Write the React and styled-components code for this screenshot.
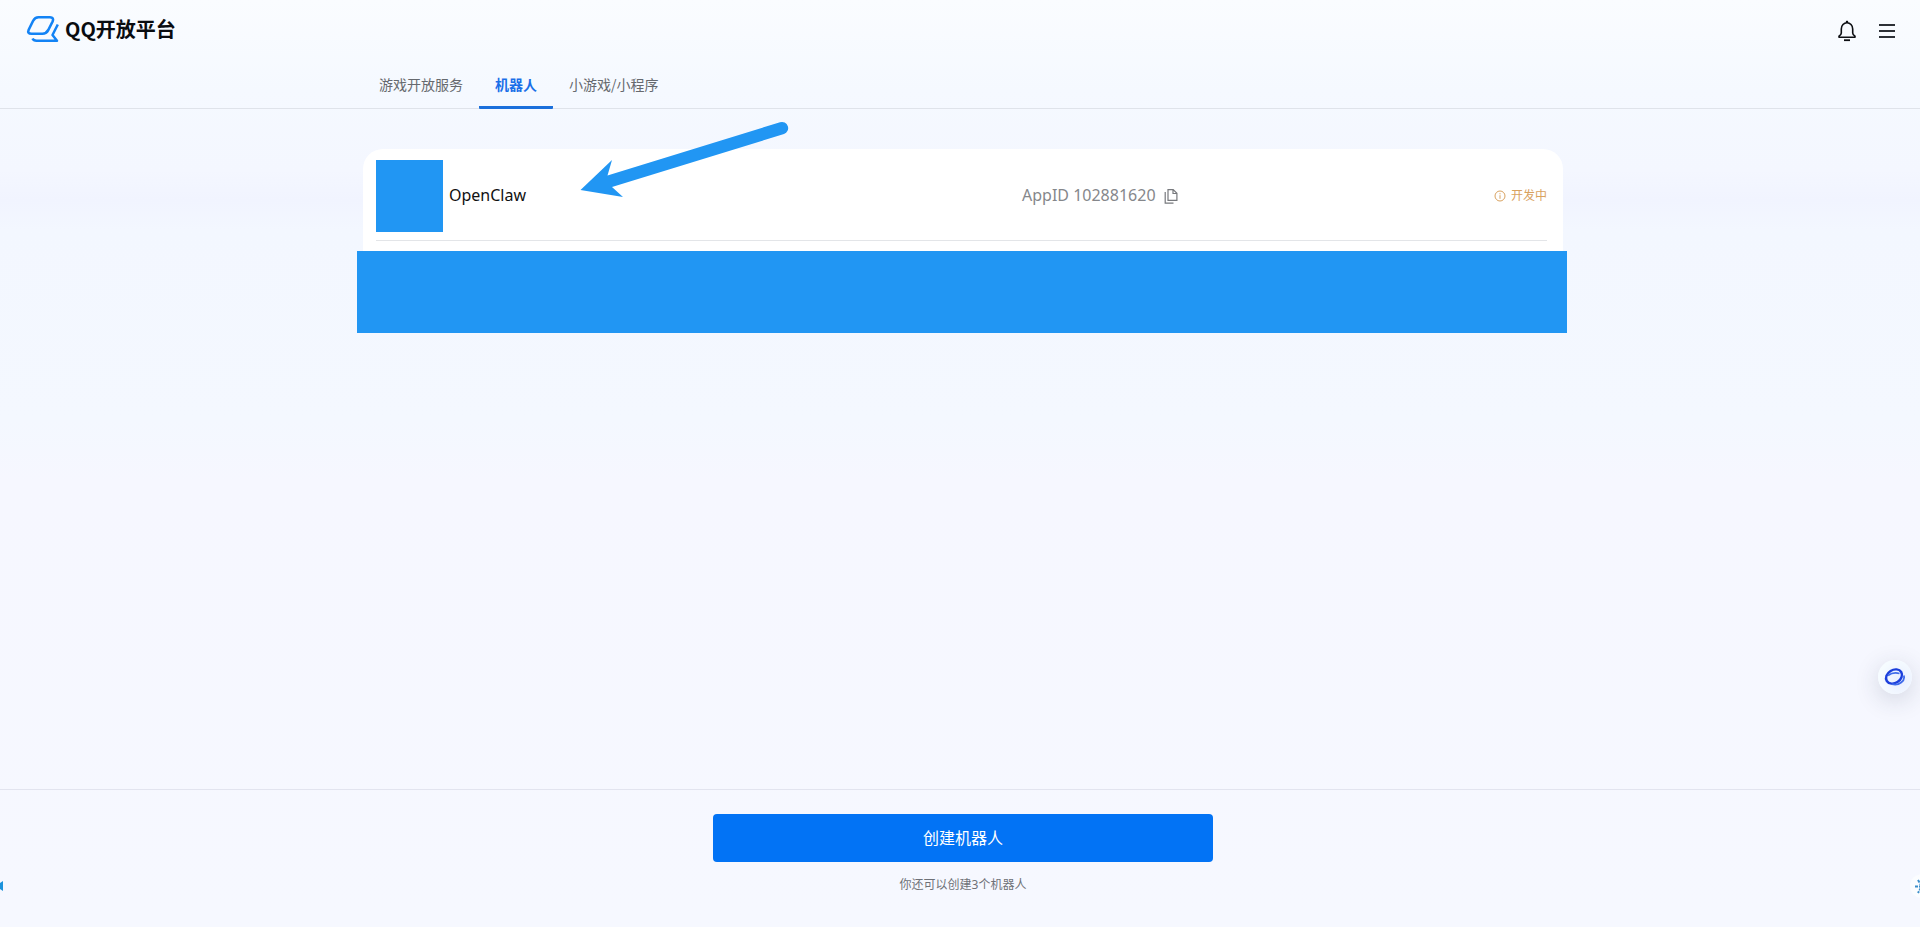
import React from 'react';
import styled, { createGlobalStyle } from 'styled-components';

const GlobalStyle = createGlobalStyle`
  * { box-sizing: border-box; }
  body {
    margin: 0;
    font-family: "Noto Sans", "Noto Sans CJK SC", sans-serif;
    color: #111;
  }
`;

const Page = styled.div`
  position: relative;
  display: flex;
  flex-direction: column;
  min-height: 100vh;
  overflow: hidden;
  background: linear-gradient(180deg, #fafcff 0, #f5f9ff 90px, #f4f7ff 170px, #f1f4ff 200px, #f3f7ff 230px, #f4f8ff 420px, #f6f7ff 480px, #f6f8ff 100%);
`;

const Header = styled.header`
  border-bottom: 1px solid #dfe3ea;
`;

const TopBar = styled.div`
  display: flex;
  align-items: flex-start;
  justify-content: space-between;
  height: 62px;
  padding: 15px 24px 0 26px;
`;

const Brand = styled.a`
  display: flex;
  align-items: center;
  gap: 5px;
  color: #0a0c10;
  font: 700 20px/28px "Noto Sans CJK SC", sans-serif;
  text-decoration: none;
`;

const Actions = styled.div`
  display: flex;
  align-items: center;
  gap: 21px;
  padding-top: 5px;
`;

const IconButton = styled.button`
  display: flex;
  padding: 0;
  border: 0;
  background: none;
  color: inherit;
  cursor: pointer;
`;

const Shell = styled.div`
  padding-left: 6px;
`;

const Content = styled.div`
  max-width: 1200px;
  margin: 0 auto;
`;

const Tabs = styled.nav`
  display: flex;
  height: 46px;
`;

const Tab = styled.a`
  padding: 11px 16px 0;
  border-bottom: 3px solid ${(p) => (p.$active ? '#1a6fdb' : 'transparent')};
  margin-bottom: -1px;
  border-radius: 1px;
  color: ${(p) => (p.$active ? '#1a6fe8' : '#66696e')};
  font-family: "Noto Sans CJK SC", sans-serif;
  font-size: 14px;
  line-height: 22px;
  font-weight: ${(p) => (p.$active ? 700 : 400)};
  text-decoration: none;
`;

const Main = styled.main`
  flex: 1;
  padding-top: 40px;
`;

const Card = styled.section`
  position: relative;
  border-radius: 20px 20px 0 0;
  background: #fff;
`;

const BotRow = styled.article`
  display: grid;
  grid-template-columns: 646px 1fr auto;
  align-items: center;
  margin: 0 16px 0 13px;
  padding: 11px 0 8px;
  border-bottom: 1px solid #e3e5e8;
`;

const BotIdentity = styled.div`
  display: flex;
  align-items: center;
  gap: 6px;
`;

const Label = styled.span`
  padding-bottom: 2px;
  font-size: 16px;
  line-height: 24px;
`;

const Avatar = styled.div`
  width: 67px;
  height: 72px;
  background: #2196f3;
`;

const AppId = styled.div`
  display: flex;
  align-items: center;
  gap: 8px;
  color: #85878b;
`;

const Status = styled.div`
  display: flex;
  align-items: center;
  gap: 5px;
  color: #d9a25f;
  font-size: 12px;
  line-height: 18px;
`;

const Masked = styled.div`
  height: 82px;
  margin: 10px -4px 0 -6px;
  background: #2196f3;
`;

const Arrow = styled.svg`
  position: absolute;
  top: -28px;
  left: 216px;
`;

const Footer = styled.footer`
  height: 138px;
  padding: 24px 0 0 6px;
  border-top: 1px solid #e2e4ef;
  text-align: center;
`;

const CreateButton = styled.button`
  display: block;
  width: 500px;
  max-width: 100%;
  height: 48px;
  margin: 0 auto 13px;
  padding: 0 0 2px;
  border: 0;
  border-radius: 4px;
  background: #0273f5;
  color: #fff;
  font: 400 16px/24px "Noto Sans CJK SC", sans-serif;
  cursor: pointer;
`;

const Hint = styled.p`
  margin: 0;
  color: #6e7177;
  font-size: 12px;
  line-height: 20px;
`;

const Assistant = styled.button`
  position: absolute;
  right: 8px;
  bottom: 233px;
  display: flex;
  align-items: center;
  justify-content: center;
  width: 34px;
  height: 34px;
  padding: 0;
  border: 0;
  border-radius: 50%;
  background: radial-gradient(circle at 65% 60%, #e9eeff, #f6fcff 70%);
  box-shadow: 0 6px 24px rgba(40, 50, 80, 0.18);
  cursor: pointer;
`;

const EdgeWidget = styled.div`
  position: absolute;
  right: -14px;
  bottom: 29px;
  width: 24px;
  height: 24px;
  border-radius: 50%;
  background: #fbfdff;
`;

const EdgeMarker = styled.svg`
  position: absolute;
  left: 0;
  bottom: 36px;
`;

const tabs = ['游戏开放服务', '机器人', '小游戏/小程序'];

const LogoMark = () => (
  <svg width="34" height="28" viewBox="0 0 34 28" fill="none" aria-hidden="true">
    <path
      d="M12.500 2.300H24Q28.300 2.300 26.600 6.500L22.300 15Q20.200 18.700 16.500 18.700H5.500Q1 18.700 2.700 14.700L7 6Q9 2.300 12.500 2.300Z"
      stroke="#1383f5" strokeWidth="2.600"
    />
    <path d="M31.800 9.500L26.500 20L31 25.700H10.500Q7.500 25.700 6.500 23.500" stroke="#1383f5" strokeWidth="2.500" strokeLinejoin="round" />
  </svg>
);

const BellIcon = () => (
  <svg width="20" height="22" viewBox="0 0 20 22" fill="none" stroke="#0d0f13" strokeWidth="1.600" aria-hidden="true">
    <path d="M10 .8V3" strokeWidth="2.200" />
    <path d="M4.300 13V9A5.700 6.300 0 0 1 15.700 9V13Q15.700 14.700 18 16.200V17.200H2V16.200Q4.300 14.700 4.300 13Z" strokeLinejoin="round" />
    <path d="M7 20.200H13" strokeWidth="1.800" />
  </svg>
);

const MenuIcon = () => (
  <svg width="18" height="16" viewBox="0 0 18 16" stroke="#2d3036" strokeWidth="2" aria-hidden="true">
    <path d="M1 2H17M1 8H17M1 14H17" />
  </svg>
);

const CopyIcon = () => (
  <svg width="14" height="16" viewBox="0 0 14 16" fill="none" stroke="#77797d" strokeWidth="1.200" aria-hidden="true">
    <path d="M4 1.600H9.200L12.900 5.300V12.400H4ZM9 1.600V5.500H12.900M1.200 4V15.200H9.500" />
  </svg>
);

const InfoIcon = () => (
  <svg width="12" height="12" viewBox="0 0 12 12" fill="none" stroke="#d9a25f" aria-hidden="true">
    <circle cx="6" cy="6" r="5" />
    <path d="M6 5.200V8.800M6 3.200V4.300" />
  </svg>
);

export default function App() {
  return (
    <>
      <GlobalStyle />
      <Page>
        <Header>
          <TopBar>
            <Brand href="#"><LogoMark />QQ开放平台</Brand>
            <Actions>
              <IconButton aria-label="通知"><BellIcon /></IconButton>
              <IconButton aria-label="菜单"><MenuIcon /></IconButton>
            </Actions>
          </TopBar>
          <Shell>
            <Content>
              <Tabs>
                {tabs.map((name) => (
                  <Tab key={name} href="#" $active={name === '机器人'}>{name}</Tab>
                ))}
              </Tabs>
            </Content>
          </Shell>
        </Header>
        <Main>
          <Shell>
            <Content>
              <Card>
                <BotRow>
                  <BotIdentity><Avatar /><Label>OpenClaw</Label></BotIdentity>
                  <AppId>
                    <Label>AppID 102881620</Label>
                    <IconButton aria-label="复制"><CopyIcon /></IconButton>
                  </AppId>
                  <Status><InfoIcon />开发中</Status>
                </BotRow>
                <Masked />
                <Arrow width="212" height="80" viewBox="579 121 212 80" aria-hidden="true">
                  <path
                    d="M580.500 190L612 160L607.500 175.500L780 122.300A6 6 0 0 1 784 134L612 187L623 197Z"
                    fill="#2196f3"
                  />
                </Arrow>
              </Card>
            </Content>
          </Shell>
        </Main>
        <Footer>
          <CreateButton>创建机器人</CreateButton>
          <Hint>你还可以创建3个机器人</Hint>
        </Footer>
        <Assistant aria-label="助手">
          <svg width="22" height="20" viewBox="0 0 22 20" fill="none" aria-hidden="true">
            <ellipse cx="10" cy="9.500" rx="8.500" ry="6.500" transform="rotate(-32 10 9.500)" stroke="#1b3fdc" strokeWidth="2.400" />
            <path d="M4 8.500Q9 4.800 15.500 6.500M19.800 8.500C21.500 14 15 19 8 17.200" stroke="#3f6bea" strokeWidth="1.800" />
          </svg>
        </Assistant>
        <EdgeMarker width="3" height="10" viewBox="0 0 3 10" aria-hidden="true">
          <path d="M0 2L3 0V10L0 8Z" fill="#1c93dc" />
        </EdgeMarker>
        <EdgeWidget>
          <svg width="24" height="24" viewBox="0 0 24 24" stroke="#3c8fca" strokeWidth="2" aria-hidden="true">
            <path d="M5 12.500H17M8 6L15 18M15 7L8 19" strokeDasharray="3 1" />
          </svg>
        </EdgeWidget>
      </Page>
    </>
  );
}
